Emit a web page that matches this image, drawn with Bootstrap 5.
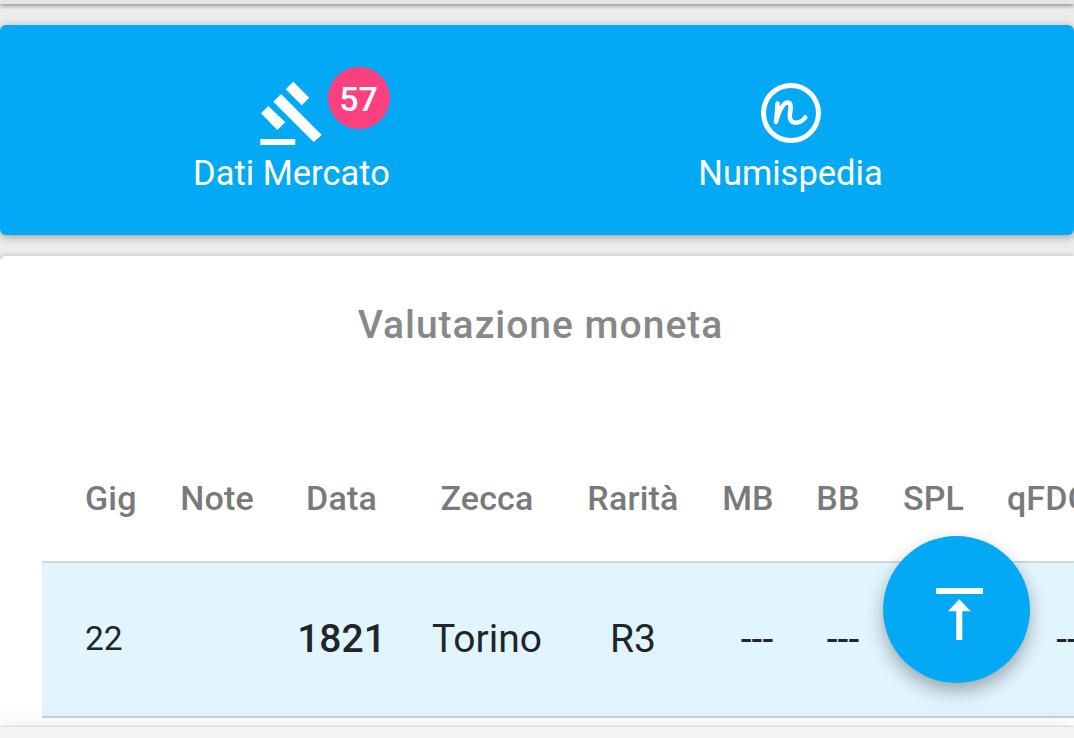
<!DOCTYPE html>
<html lang="it">
<head>
  <meta charset="UTF-8">
  <title>Valutazione moneta</title>
  <meta name="viewport" content="width=device-width, initial-scale=1">
  <link href="https://cdn.jsdelivr.net/npm/bootstrap@5.3.3/dist/css/bootstrap.min.css" rel="stylesheet">
  <style>
    html, body { height: 738px; overflow: hidden; }
    body {
      background: #ececec;
      font-family: Roboto, "Liberation Sans", sans-serif;
    }
    .top-stub {
      height: 4px;
      background: #e6e6e6;
      box-shadow: 0 1px 5px rgba(0, 0, 0, .55);
    }
    .tabs-card {
      margin-top: 21px;
      height: 210px;
      background: #03a9f4;
      color: #fff;
      border-radius: 6px;
      box-shadow: 0 2px 8px rgba(0, 0, 0, .35);
      padding: 0 34px 0 42px;
    }
    .tab-item { width: 499px; height: 100%; padding-top: 55px; }
    .tab-icon { display: block; margin: 0 auto; height: 66px; }
    .tab-label { font-size: 34.5px; line-height: 40px; margin-top: 7px; }
    .gavel-wrap { width: 120px; height: 66px; margin: 0 auto; }
    .count-badge {
      top: -13px;
      left: 96px;
      width: 62px;
      height: 62px;
      background: #fb3f7f;
      font-size: 34px;
      line-height: 65px;
    }
    .value-card {
      margin-top: 21px;
      height: 471px;
      background: #fff;
      border-radius: 6px 0 0 0;
      box-shadow: 0 1px 6px rgba(0, 0, 0, .3);
      padding-left: 42px;
    }
    .value-title {
      color: #888;
      font-size: 39px;
      letter-spacing: 1px;
      font-weight: 500;
      line-height: 44px;
      padding: 47px 0 0 7px;
      margin: 0 0 0 -42px;
      height: 187px;
    }
    .coin-table {
      table-layout: fixed;
      width: 1100px;
      margin: 0;
      border-collapse: collapse;
    }
    .coin-table th {
      color: #7a7a7a;
      font-size: 34px;
      letter-spacing: .2px;
      font-weight: 500;
      height: 119px;
      padding: 0 0 8px;
      vertical-align: middle;
      text-align: center;
      white-space: nowrap;
      border-bottom: 2px solid #cfd8dc;
      background: transparent;
      box-shadow: none;
    }
    .coin-table td {
      color: #212529;
      font-size: 39px;
      height: 155px;
      padding: 0;
      vertical-align: middle;
      text-align: center;
      white-space: nowrap;
      background: #e1f5fe;
      border-bottom: 2px solid #c6d3da;
      box-shadow: none;
    }
    .coin-table th:first-child, .coin-table td:first-child { text-align: left; padding-left: 43px; }
    .coin-table td:first-child { font-size: 33.5px; }
    .coin-table .year-cell { font-weight: 500; }
    .coin-table .dash-mb { padding-left: 18px; }
    .coin-table .dash-bb { padding-left: 10px; }
    .coin-table .dash-qfdc { padding-left: 48px; }
    .fab-top {
      position: fixed;
      left: 883px;
      top: 536px;
      width: 147px;
      height: 147px;
      padding: 0;
      background: #03a9f4;
      border: 0;
      box-shadow: 0 8px 18px rgba(0, 0, 0, .32);
    }
    .fab-top svg { display: block; }
    .page-foot {
      height: 11px;
      background: #f4f4f4;
      box-shadow: 0 -1px 2px rgba(0, 0, 0, .16), 0 -3px 24px rgba(0, 0, 0, .1);
    }
  </style>
</head>
<body>

  <div class="top-stub"></div>

  <div class="tabs-card d-flex text-center">
    <div class="tab-item">
      <div class="gavel-wrap position-relative">
        <svg class="tab-icon" width="120" height="66" viewBox="0 0 120 66" fill="#fff">
          <polygon points="61.3,1.7 77.3,17.7 69.7,25.3 53.7,9.3"/>
          <polygon points="49,14 89.7,55 81.7,62 41.3,21.7"/>
          <polygon points="36.3,26 53.3,42.3 45.3,50 29,33.3"/>
          <rect x="28.3" y="59" width="35" height="6"/>
        </svg>
        <span class="count-badge position-absolute rounded-circle text-white fw-medium">57</span>
      </div>
      <div class="tab-label">Dati Mercato</div>
    </div>
    <div class="tab-item">
      <svg class="tab-icon" width="66" height="66" viewBox="0 0 66 66" fill="none" stroke="#fff">
        <circle cx="33" cy="33" r="27.5" stroke-width="5"/>
        <path d="M19.5 23.500C19.5 30 18.500 36 18 42C20.500 33 24 23 29.500 22.500C33.500 22.500 33 28 32 33C31 38.500 33 42.700 37.500 42.700C41.500 42.700 45 40.500 47.300 37.500" stroke-width="4.500" stroke-linecap="round" stroke-linejoin="round"/>
      </svg>
      <div class="tab-label">Numispedia</div>
    </div>
  </div>

  <div class="value-card overflow-hidden">
    <h2 class="value-title text-center">Valutazione moneta</h2>
    <table class="table coin-table">
      <colgroup>
        <col width="116"><col width="118"><col width="131"><col width="160"><col width="132"><col width="98"><col width="82"><col width="109"><col width="121"><col width="133">
      </colgroup>
      <thead>
        <tr>
          <th>Gig</th><th>Note</th><th>Data</th><th>Zecca</th><th>Rarità</th><th>MB</th><th>BB</th><th>SPL</th><th>qFDC</th><th>FDC</th>
        </tr>
      </thead>
      <tbody>
        <tr>
          <td>22</td><td></td><td class="year-cell">1821</td><td>Torino</td><td>R3</td><td class="dash-mb">---</td><td class="dash-bb">---</td><td>---</td><td class="dash-qfdc">---</td><td>---</td>
        </tr>
      </tbody>
    </table>
  </div>

  <button type="button" class="btn fab-top rounded-circle" aria-label="Torna su">
    <svg width="147" height="147" viewBox="0 0 147 147" fill="#fff">
      <rect x="53" y="52" width="47" height="6"/>
      <polygon points="76.300,63.300 87.700,75.300 79.300,75.300 79.300,104 73.300,104 73.300,75.300 65,75.300"/>
    </svg>
  </button>

  <div class="page-foot fixed-bottom"></div>

</body>
</html>
